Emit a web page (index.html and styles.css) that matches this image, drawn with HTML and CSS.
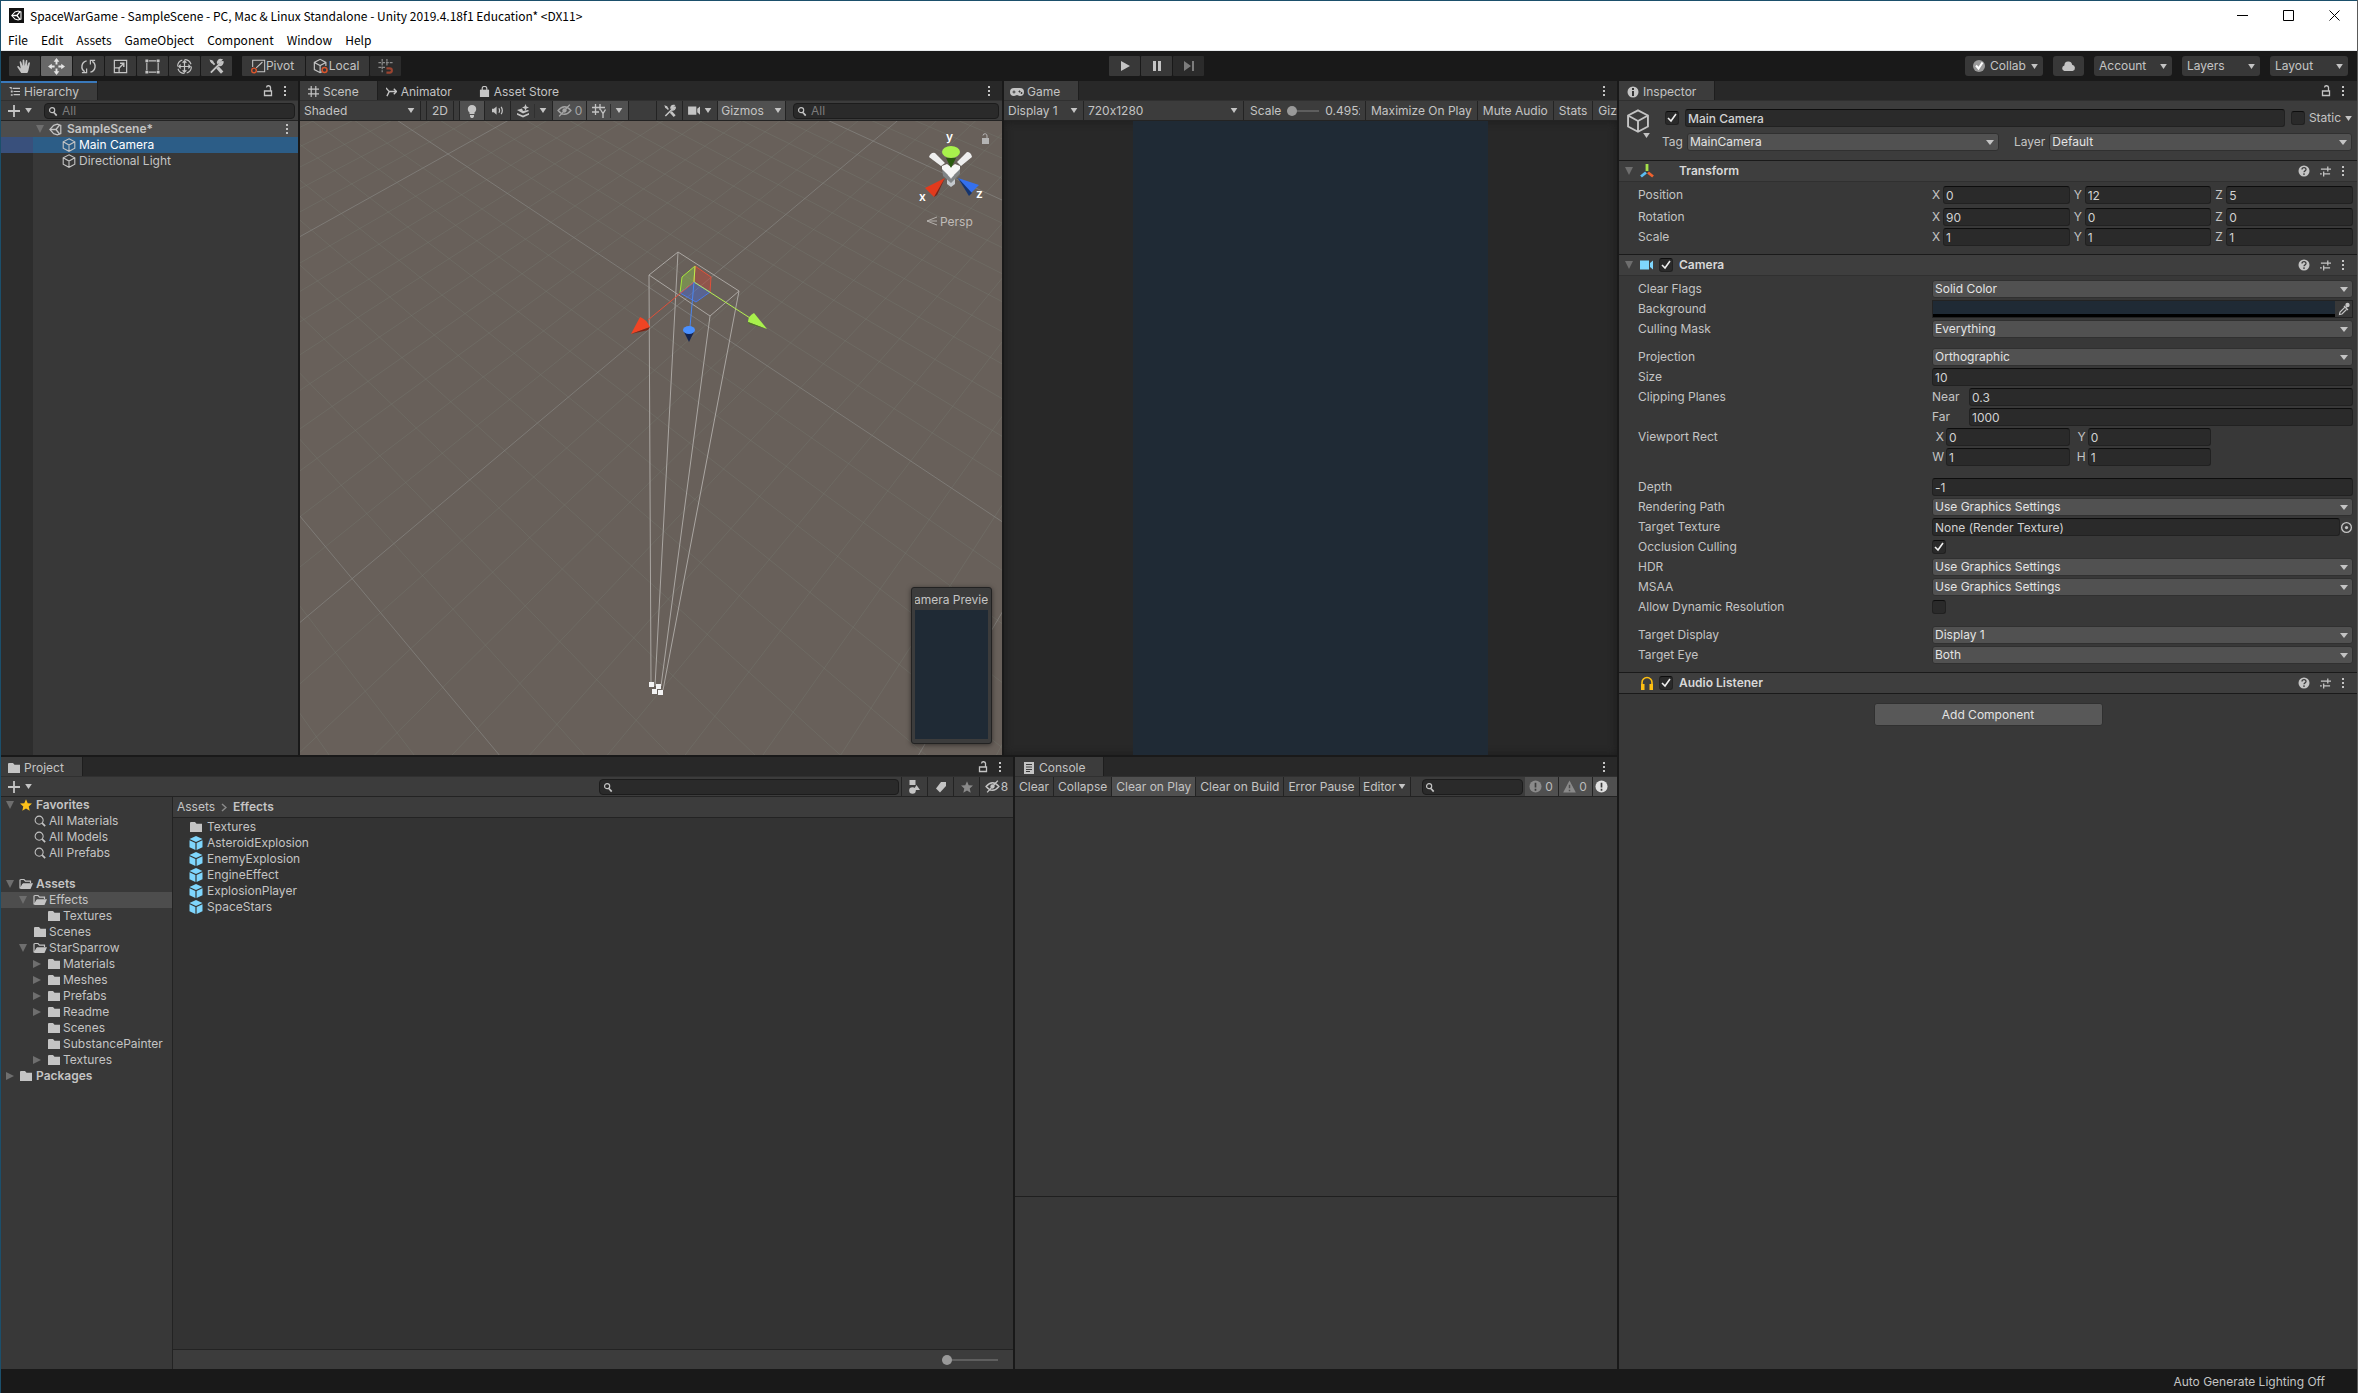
FILE: index.html
```html
<!DOCTYPE html>
<html lang="en">
<head>
<meta charset="utf-8">
<title>SpaceWarGame - SampleScene - Unity</title>
<link rel="stylesheet" href="styles.css">
</head>
<body>
<svg class="sprite" aria-hidden="true">
  <symbol id="i-unity" viewBox="0 0 14 14"><path d="M1 7 5 2.500 9 1.300 12.700 2.500V11.500L9 12.700 5 11.500Z" fill="none" stroke="currentColor" stroke-width="1.300"/><path d="M1 7H7.500L11.500 2M7.500 7l4 5" fill="none" stroke="currentColor" stroke-width="1.600"/></symbol>
  <symbol id="i-hand" viewBox="0 0 18 18"><path d="M5.500 16 1.500 9.800c-.5-1 .7-1.800 1.500-.9L5 11 3.900 4.600c-.2-1.200 1.400-1.500 1.700-.4L7 8.500V2.400c0-1.200 1.700-1.200 1.800 0L9.300 8.400l1-5.500c.3-1.200 1.900-1 1.700.3L11.600 8.800l1.500-3.700c.4-1 1.900-.6 1.600.6L13.400 12c-.3 2-.9 3-1.400 4Z" fill="currentColor"/></symbol>
  <symbol id="i-move" viewBox="0 0 18 18"><path d="M9 0 12 4H10V7H8V4H6ZM9 18 6 14H8V11h2v3h2ZM0 9 4 6V8H7v2H4v2ZM18 9l-4 3V10H11V8h3V6Z" fill="currentColor"/></symbol>
  <symbol id="i-rotate" viewBox="0 0 18 18"><path d="M7 3A6.300 6.300 0 0 0 5 14.500M11 15A6.300 6.300 0 0 0 13 3.500" fill="none" stroke="currentColor" stroke-width="1.500"/><path d="M2 15.500H7V11M16 2.500H11V7" fill="none" stroke="currentColor" stroke-width="1.300"/></symbol>
  <symbol id="i-scale" viewBox="0 0 18 18"><path d="M2.500 2.500h13v13h-13ZM2.500 10.500h5v5" fill="none" stroke="currentColor" stroke-width="1.300"/><path d="M7 11 12 6M8.500 5.500h4v4" fill="none" stroke="currentColor" stroke-width="1.500"/></symbol>
  <symbol id="i-rect" viewBox="0 0 18 18"><path d="M5 3h8M5 15h8M3 5v8M15 5v8" stroke="currentColor" stroke-width="1.200"/><path d="M1.500 1.500h3v3h-3ZM13.500 1.500h3v3h-3ZM1.500 13.500h3v3h-3ZM13.500 13.500h3v3h-3Z" fill="currentColor"/></symbol>
  <symbol id="i-multi" viewBox="0 0 18 18"><circle cx="9" cy="9" r="7.300" fill="none" stroke="currentColor" stroke-width="1.200" stroke-dasharray="9 2.400"/><path d="M9 3v12M3 9h12M7 5l2-2 2 2M7 13l2 2 2-2M5 7 3 9l2 2M13 7l2 2-2 2" fill="none" stroke="currentColor" stroke-width="1.300"/></symbol>
  <symbol id="i-tools" viewBox="0 0 18 18"><path d="M3 15.500 12 6.500M15.500 3.500 13 6 11.500 4.500 14 2a3 3 0 0 0-3.500 4" fill="none" stroke="currentColor" stroke-width="2"/><path d="M15.500 3.500a3.200 3.200 0 0 1-4 4M3 3l4 4" fill="none" stroke="currentColor" stroke-width="2"/><path d="M10 10l5 5.500" stroke="currentColor" stroke-width="3.400"/><path d="M1.500 1.500l4 1.500.5 2L3.500 5.500Z" fill="currentColor"/></symbol>
  <symbol id="i-pivot" viewBox="0 0 18 18"><path d="M3 10V2.500H16.500V15.500H8M7 11 14 4.500" fill="none" stroke="currentColor" stroke-width="1.200"/><circle cx="4.500" cy="14" r="2.600" fill="none" stroke="#d9552c" stroke-width="1.600"/></symbol>
  <symbol id="i-local" viewBox="0 0 18 18"><path d="M10 15.500 8 16.500 1.500 13V5L8 1.500 14.500 5V9M1.500 5 8 8.500 14.500 5M8 8.500v8" fill="none" stroke="currentColor" stroke-width="1.300"/><circle cx="13" cy="13.500" r="2.800" fill="none" stroke="#d9552c" stroke-width="1.600"/></symbol>
  <symbol id="i-snap" viewBox="0 0 18 18"><path d="M5.500 1v14M10.500 1v8M1.500 5h15M1.500 10h8" stroke="#8a8a8a" stroke-width="1.300" stroke-dasharray="3 1"/><path d="M10 11h3.500a2 2 0 0 1 0 4.500H10" fill="none" stroke="#9c4430" stroke-width="2.200"/></symbol>
  <symbol id="i-play" viewBox="0 0 10 10"><path d="M1 0 10 5 1 10Z" fill="currentColor"/></symbol>
  <symbol id="i-pause" viewBox="0 0 10 10"><path d="M1 0h3v10H1ZM6 0h3v10H6Z" fill="currentColor"/></symbol>
  <symbol id="i-step" viewBox="0 0 10 10"><path d="M0 0 7 5 0 10ZM8 0h2v10H8Z" fill="currentColor"/></symbol>
  <symbol id="i-down" viewBox="0 0 8 6"><path d="M0 0H8L4 6Z" fill="currentColor"/></symbol>
  <symbol id="i-open" viewBox="0 0 8 8"><path d="M0 0H8L4 8Z" fill="currentColor"/></symbol>
  <symbol id="i-shut" viewBox="0 0 8 8"><path d="M0 0 8 4 0 8Z" fill="currentColor"/></symbol>
  <symbol id="i-dots" viewBox="0 0 4 12"><path d="M1 1h2v2H1ZM1 5h2v2H1ZM1 9h2v2H1Z" fill="currentColor"/></symbol>
  <symbol id="i-lock" viewBox="0 0 10 12"><path d="M1.500 6h7v4.500h-7ZM7.500 6V3a2 2 0 0 0-4-.5" fill="none" stroke="currentColor" stroke-width="1.300"/></symbol>
  <symbol id="i-list" viewBox="0 0 12 12"><path d="M4 2.500h8M5 6h7M5 9.500h7" stroke="currentColor" stroke-width="1.300"/><path d="M0 1h3v3ZM2 5h2v2H2ZM2 9h2v1.500H2Z" fill="currentColor"/></symbol>
  <symbol id="i-hash" viewBox="0 0 12 12"><path d="M3.500 0v12M8.500 0v12M0 3.500h12M0 8.500h12" stroke="currentColor" stroke-width="1.300"/></symbol>
  <symbol id="i-anim" viewBox="0 0 12 12"><path d="M0 2l3.500 4L1 11M3.500 6H11M8.500 3 11.500 6l-3 3" fill="none" stroke="currentColor" stroke-width="1.500"/></symbol>
  <symbol id="i-bag" viewBox="0 0 12 12"><path d="M1 4h10v8H1Z" fill="currentColor"/><path d="M3.500 6V2.500a2.500 2 0 0 1 5 0V6" fill="none" stroke="currentColor" stroke-width="1.300"/></symbol>
  <symbol id="i-game" viewBox="0 0 14 12"><path d="M4 2h6a4 4 0 0 1 0 8c-1.500 0-2-1-3-1s-1.500 1-3 1a4 4 0 0 1 0-8Z" fill="currentColor"/><path d="M2.500 6h3M4 4.500v3M9 5h1v1H9ZM11 6.500h1v1h-1Z" stroke="#3c3c3c"/></symbol>
  <symbol id="i-info" viewBox="0 0 12 12"><circle cx="6" cy="6" r="5.500" fill="currentColor"/><path d="M5 2h2v2H5ZM5 5h2v5H5Z" fill="#333"/></symbol>
  <symbol id="i-help" viewBox="0 0 12 12"><circle cx="6" cy="6" r="5.500" fill="currentColor"/><path d="M4 4.500c0-2.500 4-2.500 4 0 0 1.500-2 1.200-2 2.800M6 8.300V10" fill="none" stroke="#3c3c3c" stroke-width="1.300"/></symbol>
  <symbol id="i-preset" viewBox="0 0 12 12"><path d="M1 3.500h11M8.500 0.500v5.500M0 8.500h2M4 6v5.500M4 8.500h7" stroke="currentColor" stroke-width="1.400"/></symbol>
  <symbol id="i-plus" viewBox="0 0 12 12"><path d="M6 0v12M0 6h12" stroke="currentColor" stroke-width="1.800"/></symbol>
  <symbol id="i-find" viewBox="0 0 12 12"><circle cx="4.500" cy="4.500" r="2.800" fill="none" stroke="currentColor" stroke-width="1.300"/><path d="M6.500 7 9.500 10.500" stroke="currentColor" stroke-width="1.800"/></symbol>
  <symbol id="i-glass" viewBox="0 0 14 14"><circle cx="6" cy="6" r="4.700" fill="none" stroke="currentColor" stroke-width="1.200"/><path d="M9.500 9.500 13 13" stroke="currentColor" stroke-width="2"/></symbol>
  <symbol id="i-cube" viewBox="0 0 14 14"><path d="M7 .8 12.800 3.800V10.200L7 13.300 1.200 10.200V3.800ZM1.200 3.800 7 7l5.800-3.200M7 7v6.300" fill="none" stroke="currentColor" stroke-width="1.100"/></symbol>
  <symbol id="i-prefab" viewBox="0 0 14 14"><path d="M7 0 13.500 3 7 6 .5 3ZM.5 4.200 6.400 7V14L.5 11.200ZM13.500 4.200 7.600 7V14l5.900-2.800Z" fill="#7fd6fd"/></symbol>
  <symbol id="i-folder" viewBox="0 0 14 12"><path d="M1 1.500 2 1H6L7.500 2.700H13V11H1Z" fill="currentColor"/></symbol>
  <symbol id="i-fopen" viewBox="0 0 14 12"><path d="M1 10.500V2L2 1.500H5L6.500 3.200H11.500V5M1.500 10.500 4 6" fill="none" stroke="currentColor" stroke-width="1.200"/><path d="M4 5.300H14L11.500 11H1.200Z" fill="currentColor"/></symbol>
  <symbol id="i-star" viewBox="0 0 12 12"><path d="M6 .3 7.700 4.200 12 4.600 8.700 7.400 9.700 11.700 6 9.400 2.300 11.700 3.300 7.400 0 4.600 4.300 4.200Z" fill="currentColor"/></symbol>
  <symbol id="i-bulb" viewBox="0 0 12 14"><path d="M3.500 8.500a4.200 4.200 0 1 1 5 0V10h-5ZM4 11h4v1.500L7 14H5L4 12.500Z" fill="currentColor"/></symbol>
  <symbol id="i-audio" viewBox="0 0 14 12"><path d="M1 4H3L6 1.500v9L3 8H1Z" fill="currentColor"/><path d="M8.500 3.500q1.500 2.500 0 5M11 2q2.500 4 0 8" fill="none" stroke="currentColor" stroke-width="1.300"/></symbol>
  <symbol id="i-fx" viewBox="0 0 14 14"><path d="M1 6 6 4.500 7 7 12 6 13 7 7 9.500ZM1 9l6 2.500L13 9v1.800L7 13.500 1 10.800Z" fill="currentColor"/><path d="M9.500 0 10.500 2.500 13 3.500 10.500 4.500 9.500 7 8.500 4.500 6 3.500 8.500 2.500Z" fill="currentColor"/></symbol>
  <symbol id="i-hidden" viewBox="0 0 14 12"><path d="M1 6q6-7 12 0-6 7-12 0ZM2 11.500 12 .5" fill="none" stroke="currentColor" stroke-width="1.300"/><circle cx="7" cy="6" r="2" fill="currentColor"/></symbol>
  <symbol id="i-gridy" viewBox="0 0 14 14"><path d="M3.500 0v11M8 0v6M0 3.500h13M0 8h7M8.500 5.500 11 9.500l2.500-4M11 9.500V14" fill="none" stroke="currentColor" stroke-width="1.300"/></symbol>
  <symbol id="i-cam" viewBox="0 0 14 12"><path d="M0 1.500h9v9H0ZM10 4 13 1.500v9L10 8Z" fill="currentColor"/></symbol>
  <symbol id="i-shapes" viewBox="0 0 12 14"><path d="M1 0h6v5H1ZM8 5l3.500 5H5Z" fill="currentColor"/><circle cx="4" cy="10.500" r="3.300" fill="currentColor"/></symbol>
  <symbol id="i-tag" viewBox="0 0 12 12"><path d="M6 1h5v4L5 11.500 1 7.500Z" fill="currentColor"/></symbol>
  <symbol id="i-note" viewBox="0 0 12 12"><path d="M1 0h10v12H1Z" fill="currentColor"/><path d="M3 2.500h6M3 5h6M3 7.500h6M3 9.500h4" stroke="#3c3c3c"/></symbol>
  <symbol id="i-bang" viewBox="0 0 14 14"><circle cx="7" cy="7" r="6.500" fill="currentColor"/><path d="M7 3v5M7 9.500v2" stroke="#3c3c3c" stroke-width="1.800"/></symbol>
  <symbol id="i-warn" viewBox="0 0 14 14"><path d="M7 .5 13.800 13.500H.2Z" fill="currentColor"/><path d="M7 5v4M7 10.500v1.500" stroke="#505050" stroke-width="1.600"/></symbol>
  <symbol id="i-axes" viewBox="0 0 14 14"><path d="M7 0v7" stroke="#a5e04a" stroke-width="2.800"/><path d="M6 8.500 1 12.500" stroke="#5bbcf0" stroke-width="2.800"/><path d="M8 8.500l5 4" stroke="#f0622e" stroke-width="2.800"/></symbol>
  <symbol id="i-phones" viewBox="0 0 14 14"><path d="M2 9V6.500a5 5 0 0 1 10 0V9" fill="none" stroke="#fdbf12" stroke-width="1.600"/><path d="M1 8h3.500v6H1ZM9.500 8H13v6H9.500Z" fill="#fdbf12"/></symbol>
  <symbol id="i-cloud" viewBox="0 0 16 12"><path d="M3.500 11a3.200 3.200 0 0 1 0-6.200A4.300 4.300 0 0 1 12 4a3.600 3.600 0 0 1 .5 7Z" fill="currentColor"/></symbol>
  <symbol id="i-check" viewBox="0 0 12 12"><circle cx="6" cy="6" r="6" fill="#9a9a9a"/><path d="M3 5.500 5.500 8.500 9.500 2.500" fill="none" stroke="#fff" stroke-width="2"/></symbol>
  <symbol id="i-drop" viewBox="0 0 12 14"><path d="M1.500 12.500 2 10 7 5l2 2-5 5ZM6 4l4 4M8 5.500 10 2.500" fill="none" stroke="currentColor" stroke-width="1.200"/><circle cx="9.500" cy="3" r="2.200" fill="currentColor"/></symbol>
  <symbol id="i-pick" viewBox="0 0 12 12"><circle cx="6" cy="6" r="4.500" fill="none" stroke="currentColor" stroke-width="1.200"/><circle cx="6" cy="6" r="1.500" fill="currentColor"/></symbol>
</svg>

<header class="titlebar">
  <div class="caption">
    <span class="app-icon"><svg width="11" height="11"><use href="#i-unity"/></svg></span>
    <span class="caption-text">SpaceWarGame - SampleScene - PC, Mac &amp; Linux Standalone - Unity 2019.4.18f1 Education* &lt;DX11&gt;</span>
    <div class="win-controls">
      <button aria-label="Minimize"><svg width="11" height="11"><path d="M0 5.500h11" stroke="#000"/></svg></button>
      <button aria-label="Maximize"><svg width="11" height="11"><path d="M.5.500h10v10H.5Z" fill="none" stroke="#000"/></svg></button>
      <button aria-label="Close"><svg width="11" height="11"><path d="M.5.500l10 10M10.500.500l-10 10" stroke="#000"/></svg></button>
    </div>
  </div>
  <nav class="menu"><a href="#">File</a><a href="#">Edit</a><a href="#">Assets</a><a href="#">GameObject</a><a href="#">Component</a><a href="#">Window</a><a href="#">Help</a></nav>
</header>

<div class="toolbar">
  <div class="group tools">
    <button aria-label="Hand"><svg width="17" height="17"><use href="#i-hand"/></svg></button>
    <button class="on" aria-label="Move"><svg width="17" height="17"><use href="#i-move"/></svg></button>
    <button aria-label="Rotate"><svg width="17" height="17"><use href="#i-rotate"/></svg></button>
    <button aria-label="Scale"><svg width="17" height="17"><use href="#i-scale"/></svg></button>
    <button aria-label="Rect"><svg width="17" height="17"><use href="#i-rect"/></svg></button>
    <button aria-label="Transform"><svg width="17" height="17"><use href="#i-multi"/></svg></button>
    <button aria-label="Custom tools"><svg width="17" height="17"><use href="#i-tools"/></svg></button>
    <button class="wide first"><svg width="16" height="16"><use href="#i-pivot"/></svg>Pivot</button>
    <button class="wide"><svg width="16" height="16"><use href="#i-local"/></svg>Local</button>
    <button class="dim" aria-label="Snap"><svg width="17" height="17"><use href="#i-snap"/></svg></button>
  </div>
  <div class="group">
    <button aria-label="Play"><svg width="10" height="10"><use href="#i-play"/></svg></button>
    <button aria-label="Pause"><svg width="10" height="10"><use href="#i-pause"/></svg></button>
    <button class="dim" aria-label="Step"><svg width="10" height="10"><use href="#i-step"/></svg></button>
  </div>
  <div class="group account">
    <button class="drop collab"><svg width="12" height="12"><use href="#i-check"/></svg>Collab<svg width="7" height="5"><use href="#i-down"/></svg></button>
    <button aria-label="Services"><svg width="15" height="11"><use href="#i-cloud"/></svg></button>
    <button class="drop">Account<svg width="7" height="5"><use href="#i-down"/></svg></button>
    <button class="drop">Layers<svg width="7" height="5"><use href="#i-down"/></svg></button>
    <button class="drop">Layout<svg width="7" height="5"><use href="#i-down"/></svg></button>
  </div>
</div>

<div class="workspace">
  <div class="docks">
    <div class="dock-row upper">
      <section class="panel hierarchy">
        <div class="tabs">
          <div class="tab active focus"><svg width="11" height="11"><use href="#i-list"/></svg>Hierarchy</div>
          <div class="tab-tools"><svg width="10" height="12"><use href="#i-lock"/></svg><svg width="4" height="12"><use href="#i-dots"/></svg></div>
        </div>
        <div class="bar">
          <button class="add" aria-label="Create"><svg width="12" height="12"><use href="#i-plus"/></svg><svg width="7" height="5"><use href="#i-down"/></svg></button>
          <label class="search"><svg width="11" height="11"><use href="#i-find"/></svg><input type="text" placeholder="All" aria-label="Search hierarchy"></label>
        </div>
        <div class="tree scene-tree">
          <div class="row head"><svg class="arrow" width="8" height="8"><use href="#i-open"/></svg><svg width="13" height="13"><use href="#i-unity"/></svg><b>SampleScene*</b><svg class="end" width="4" height="12"><use href="#i-dots"/></svg></div>
          <div class="row sel"><svg width="14" height="14"><use href="#i-cube"/></svg>Main Camera</div>
          <div class="row"><svg width="14" height="14"><use href="#i-cube"/></svg>Directional Light</div>
        </div>
      </section>

      <section class="panel scene">
        <div class="tabs">
          <div class="tab active"><svg width="11" height="11"><use href="#i-hash"/></svg>Scene</div>
          <div class="tab"><svg width="11" height="11"><use href="#i-anim"/></svg>Animator</div>
          <div class="tab store"><svg width="11" height="11"><use href="#i-bag"/></svg>Asset Store</div>
          <div class="tab-tools"><svg width="4" height="12"><use href="#i-dots"/></svg></div>
        </div>
        <div class="bar">
          <button class="cell shaded"><span>Shaded</span><svg width="8" height="5"><use href="#i-down"/></svg></button>
          <button class="cell mode">2D</button>
          <button class="cell lit icon first" aria-label="Lighting"><svg width="12" height="14"><use href="#i-bulb"/></svg></button>
          <button class="cell icon" aria-label="Audio"><svg width="13" height="11"><use href="#i-audio"/></svg></button>
          <button class="cell split" aria-label="Effects"><svg width="14" height="14"><use href="#i-fx"/></svg><i></i><svg width="8" height="5"><use href="#i-down"/></svg></button>
          <button class="cell lit faint"><svg width="15" height="13"><use href="#i-hidden"/></svg>0</button>
          <button class="cell lit split" aria-label="Grid"><svg width="14" height="14"><use href="#i-gridy"/></svg><i></i><svg width="8" height="5"><use href="#i-down"/></svg></button>
          <span class="cell blank"></span>
          <button class="cell icon" aria-label="Editor tools"><svg width="14" height="14"><use href="#i-tools"/></svg></button>
          <button class="cell cam" aria-label="Camera"><svg width="13" height="11"><use href="#i-cam"/></svg><svg width="8" height="5"><use href="#i-down"/></svg></button>
          <button class="cell lit gizmos">Gizmos<i></i><svg width="8" height="5"><use href="#i-down"/></svg></button>
          <label class="search"><svg width="11" height="11"><use href="#i-find"/></svg><input type="text" placeholder="All" aria-label="Search scene"></label>
        </div>
        <div class="view">
          <svg class="canvas" viewBox="0 0 702 634" preserveAspectRatio="xMidYMid slice">
            <g id="grid"></g>
            <g fill="none" stroke="#aaa6a2">
              <path d="M378 131 349 154 410 195 439 170ZM349 154 351 563M378 131 355 565M410 195 361 565M439 170 363 569"/>
            </g>
            <path d="M349 561h5v5h-5ZM356 563h5v5h-5ZM352 568h5v5h-5ZM358 569h5v5h-5Z" fill="#f2f2f2"/>
            <path d="M395 145 382 156 380 172 394 161Z" fill="#8fc04a" fill-opacity=".45" stroke="#a5e83a"/>
            <path d="M395 145 411 156 410 171 394 161Z" fill="#c04a3a" fill-opacity=".45" stroke="#e0503a"/>
            <path d="M394 161 410 171 396 181 380 172Z" fill="#4a68c8" fill-opacity=".5" stroke="#4a7ae8"/>
            <path d="M395 145 394 161" stroke="#b4ee50"/>
            <path d="M394 161 348 199" stroke="#e0503a"/><path d="M394 161 450 197" stroke="#b4ee50"/><path d="M394 161 390 206" stroke="#4a86f0"/>
            <path d="M331 213 340 196Q346 198 350 206Z" fill="#f04424"/><path d="M331 213 350 206 348 209Z" fill="#7c2416"/>
            <path d="M467 208 454 192Q448 195 448 201Z" fill="#a8f04c"/><path d="M467 208 448 201 449 203Z" fill="#4e7426"/>
            <path d="M384 211 389 221 394 211Z" fill="#142450"/><ellipse cx="389" cy="209" rx="6" ry="4" fill="#4a90ff"/>
            <path d="M629 36Q631 31 635 32L645 42 641 45ZM672 36Q671 31 667 31L657 41 661 45Z" fill="#eee"/>
            <path d="M651 66 647 63V54H655V63Z" fill="#c4c8cc"/>
            <path d="M642 47 651 58 660 47V53L651 62 643 55Z" fill="#808486"/>
            <path d="M642 45 647 43 651 46 655 43 660 45V48L651 57 642 48Z" fill="#f6f6f6"/>
            <path d="M646 37H656L651 47Z" fill="#2a5a10"/><ellipse cx="651" cy="31" rx="9" ry="6" fill="#a8f24c"/>
            <path d="M645 57 625 67 634 76Z" fill="#e23a1c"/><path d="M645 57 637 74 634 76Z" fill="#7c2014"/>
            <path d="M658 57 679 64 669 74Z" fill="#3470ee"/><path d="M658 57 669 75 672 72Z" fill="#16346c"/>
            <g class="axis"><text x="646" y="20">y</text><text x="619" y="80">x</text><text x="676" y="77">z</text></g>
            <path d="M637 96 627 100 637 104M627 100h10" fill="none" stroke="#b4b0ac"/>
            <text class="persp" x="640" y="105">Persp</text>
            <path d="M682 17h7v6h-7Z" fill="#b4b4b4"/><path d="M687 17v-2a2 2 0 0 0-4-.5" fill="none" stroke="#b4b4b4"/>
          </svg>
          <div class="preview"><span>Camera Preview</span><div></div></div>
        </div>
      </section>

      <section class="panel game">
        <div class="tabs">
          <div class="tab active"><svg width="14" height="12"><use href="#i-game"/></svg>Game</div>
          <div class="tab-tools"><svg width="4" height="12"><use href="#i-dots"/></svg></div>
        </div>
        <div class="bar">
          <button class="cell disp"><span>Display 1</span><svg width="8" height="5"><use href="#i-down"/></svg></button>
          <button class="cell res"><span>720x1280</span><svg width="8" height="5"><use href="#i-down"/></svg></button>
          <label class="cell zoom">Scale<input class="slider" type="range" min="0" max="100" value="0"><output>0.495x</output></label>
          <button class="cell">Maximize On Play</button>
          <button class="cell">Mute Audio</button>
          <button class="cell">Stats</button>
          <button class="cell cut">Gizmos</button>
        </div>
        <div class="screen"><div></div></div>
      </section>
    </div>

    <div class="dock-row lower">
      <section class="panel project">
        <div class="tabs">
          <div class="tab active"><svg width="14" height="12"><use href="#i-folder"/></svg>Project</div>
          <div class="tab-tools"><svg width="10" height="12"><use href="#i-lock"/></svg><svg width="4" height="12"><use href="#i-dots"/></svg></div>
        </div>
        <div class="bar">
          <button class="add" aria-label="Create asset"><svg width="12" height="12"><use href="#i-plus"/></svg><svg width="7" height="5"><use href="#i-down"/></svg></button>
          <label class="search"><svg width="11" height="11"><use href="#i-find"/></svg><input type="text" aria-label="Search project"></label>
          <button class="cell icon" aria-label="Search by type"><svg width="13" height="14"><use href="#i-shapes"/></svg></button>
          <button class="cell icon" aria-label="Search by label"><svg width="12" height="12"><use href="#i-tag"/></svg></button>
          <button class="cell icon muted" aria-label="Save search"><svg width="12" height="12"><use href="#i-star"/></svg></button>
          <button class="cell count"><svg width="15" height="13"><use href="#i-hidden"/></svg>8</button>
        </div>
        <div class="browser">
          <div class="tree folders">
            <div class="row"><svg class="arrow" width="8" height="8"><use href="#i-open"/></svg><svg class="gold" width="14" height="12"><use href="#i-star"/></svg><b>Favorites</b></div>
            <div class="row d1 leaf"><svg width="14" height="12"><use href="#i-glass"/></svg>All Materials</div>
            <div class="row d1 leaf"><svg width="14" height="12"><use href="#i-glass"/></svg>All Models</div>
            <div class="row d1 leaf last"><svg width="14" height="12"><use href="#i-glass"/></svg>All Prefabs</div>
            <div class="row"><svg class="arrow" width="8" height="8"><use href="#i-open"/></svg><svg width="14" height="12"><use href="#i-fopen"/></svg><b>Assets</b></div>
            <div class="row d1 hot"><svg class="arrow" width="8" height="8"><use href="#i-open"/></svg><svg width="14" height="12"><use href="#i-fopen"/></svg>Effects</div>
            <div class="row d2 leaf"><svg width="14" height="12"><use href="#i-folder"/></svg>Textures</div>
            <div class="row d1 leaf"><svg width="14" height="12"><use href="#i-folder"/></svg>Scenes</div>
            <div class="row d1"><svg class="arrow" width="8" height="8"><use href="#i-open"/></svg><svg width="14" height="12"><use href="#i-fopen"/></svg>StarSparrow</div>
            <div class="row d2"><svg class="arrow" width="8" height="8"><use href="#i-shut"/></svg><svg width="14" height="12"><use href="#i-folder"/></svg>Materials</div>
            <div class="row d2"><svg class="arrow" width="8" height="8"><use href="#i-shut"/></svg><svg width="14" height="12"><use href="#i-folder"/></svg>Meshes</div>
            <div class="row d2"><svg class="arrow" width="8" height="8"><use href="#i-shut"/></svg><svg width="14" height="12"><use href="#i-folder"/></svg>Prefabs</div>
            <div class="row d2"><svg class="arrow" width="8" height="8"><use href="#i-shut"/></svg><svg width="14" height="12"><use href="#i-folder"/></svg>Readme</div>
            <div class="row d2 leaf"><svg width="14" height="12"><use href="#i-folder"/></svg>Scenes</div>
            <div class="row d2 leaf"><svg width="14" height="12"><use href="#i-folder"/></svg>SubstancePainter</div>
            <div class="row d2"><svg class="arrow" width="8" height="8"><use href="#i-shut"/></svg><svg width="14" height="12"><use href="#i-folder"/></svg>Textures</div>
            <div class="row"><svg class="arrow" width="8" height="8"><use href="#i-shut"/></svg><svg width="14" height="12"><use href="#i-folder"/></svg><b>Packages</b></div>
          </div>
          <div class="files">
            <div class="crumbs"><a href="#">Assets</a><svg width="6" height="9"><path d="M1 1l4 3.500-4 3.500" fill="none" stroke="#8a8a8a" stroke-width="1.500"/></svg><b>Effects</b></div>
            <div class="tree list">
              <div class="row"><svg width="14" height="12"><use href="#i-folder"/></svg>Textures</div>
              <div class="row"><svg width="14" height="14"><use href="#i-prefab"/></svg>AsteroidExplosion</div>
              <div class="row"><svg width="14" height="14"><use href="#i-prefab"/></svg>EnemyExplosion</div>
              <div class="row"><svg width="14" height="14"><use href="#i-prefab"/></svg>EngineEffect</div>
              <div class="row"><svg width="14" height="14"><use href="#i-prefab"/></svg>ExplosionPlayer</div>
              <div class="row"><svg width="14" height="14"><use href="#i-prefab"/></svg>SpaceStars</div>
            </div>
            <div class="foot"><input class="slider" type="range" min="0" max="100" value="0" aria-label="Icon size"></div>
          </div>
        </div>
      </section>

      <section class="panel console">
        <div class="tabs">
          <div class="tab active"><svg width="12" height="12"><use href="#i-note"/></svg>Console</div>
          <div class="tab-tools"><svg width="4" height="12"><use href="#i-dots"/></svg></div>
        </div>
        <div class="bar">
          <button class="cell">Clear</button>
          <button class="cell">Collapse</button>
          <button class="cell lit">Clear on Play</button>
          <button class="cell">Clear on Build</button>
          <button class="cell">Error Pause</button>
          <button class="cell editor">Editor<svg width="8" height="5"><use href="#i-down"/></svg></button>
          <label class="search"><svg width="11" height="11"><use href="#i-find"/></svg><input type="text" aria-label="Search log"></label>
          <button class="cell lit tally"><svg width="13" height="13"><use href="#i-bang"/></svg>0</button>
          <button class="cell lit tally"><svg width="13" height="13"><use href="#i-warn"/></svg>0</button>
          <button class="cell lit cut errors" aria-label="Errors"><svg width="13" height="13"><use href="#i-bang"/></svg></button>
        </div>
        <div class="log"></div>
        <div class="detail"></div>
      </section>
    </div>
  </div>

  <section class="panel inspector">
    <div class="tabs">
      <div class="tab active"><svg width="12" height="12"><use href="#i-info"/></svg>Inspector</div>
      <div class="tab-tools"><svg width="10" height="12"><use href="#i-lock"/></svg><svg width="4" height="12"><use href="#i-dots"/></svg></div>
    </div>
    <div class="object">
      <div class="object-icon"><svg width="24" height="24"><use href="#i-cube"/></svg><svg width="7" height="5"><use href="#i-down"/></svg></div>
      <div class="object-fields">
        <div class="name-row">
          <input type="checkbox" checked aria-label="Active">
          <input class="field name" type="text" value="Main Camera" aria-label="Name">
          <label class="static"><input type="checkbox">Static<svg width="7" height="5"><use href="#i-down"/></svg></label>
        </div>
        <div class="tag-row">
          <label for="tag">Tag</label><select id="tag"><option>MainCamera</option></select>
          <label for="layer">Layer</label><select id="layer"><option>Default</option></select>
        </div>
      </div>
    </div>

    <div class="comp-head"><svg class="arrow" width="8" height="8"><use href="#i-open"/></svg><svg class="kind" width="14" height="14"><use href="#i-axes"/></svg><span class="tick"></span><b>Transform</b><svg width="12" height="12"><use href="#i-help"/></svg><svg width="11" height="11"><use href="#i-preset"/></svg><svg width="4" height="12"><use href="#i-dots"/></svg></div>
    <div class="props">
      <div class="prop wide-gap"><span>Position</span><div class="triple"><label>X<input class="field" value="0"></label><label>Y<input class="field" value="12"></label><label>Z<input class="field" value="5"></label></div></div>
      <div class="prop"><span>Rotation</span><div class="triple"><label>X<input class="field" value="90"></label><label>Y<input class="field" value="0"></label><label>Z<input class="field" value="0"></label></div></div>
      <div class="prop"><span>Scale</span><div class="triple"><label>X<input class="field" value="1"></label><label>Y<input class="field" value="1"></label><label>Z<input class="field" value="1"></label></div></div>
    </div>

    <div class="comp-head"><svg class="arrow" width="8" height="8"><use href="#i-open"/></svg><svg class="kind blue" width="14" height="12"><use href="#i-cam"/></svg><span class="tick"><input type="checkbox" checked aria-label="Camera enabled"></span><b>Camera</b><svg width="12" height="12"><use href="#i-help"/></svg><svg width="11" height="11"><use href="#i-preset"/></svg><svg width="4" height="12"><use href="#i-dots"/></svg></div>
    <div class="props">
      <div class="prop"><label for="clear">Clear Flags</label><select id="clear"><option>Solid Color</option></select></div>
      <div class="prop"><span>Background</span><div class="color"><button class="swatch" aria-label="Background colour"></button><svg width="12" height="14"><use href="#i-drop"/></svg></div></div>
      <div class="prop sep"><label for="cull">Culling Mask</label><select id="cull"><option>Everything</option></select></div>
      <div class="prop"><label for="proj">Projection</label><select id="proj"><option>Orthographic</option></select></div>
      <div class="prop"><label for="size">Size</label><input class="field" id="size" value="10"></div>
      <div class="prop"><span>Clipping Planes</span><label class="plane"><span>Near</span><input class="field" value="0.3"></label></div>
      <div class="prop"><span></span><label class="plane"><span>Far</span><input class="field" value="1000"></label></div>
      <div class="prop"><span>Viewport Rect</span><div class="triple rect"><label><span>X</span><input class="field" value="0"></label><label><span>Y</span><input class="field" value="0"></label></div></div>
      <div class="prop sep tall"><span></span><div class="triple rect"><label><span>W</span><input class="field" value="1"></label><label><span>H</span><input class="field" value="1"></label></div></div>
      <div class="prop"><label for="depth">Depth</label><input class="field" id="depth" value="-1"></div>
      <div class="prop"><label for="path">Rendering Path</label><select id="path"><option>Use Graphics Settings</option></select></div>
      <div class="prop"><label for="tex">Target Texture</label><div class="object-field"><input class="field" id="tex" value="None (Render Texture)"><svg width="13" height="13"><use href="#i-pick"/></svg></div></div>
      <div class="prop"><label for="occ">Occlusion Culling</label><input type="checkbox" id="occ" checked></div>
      <div class="prop"><label for="hdr">HDR</label><select id="hdr"><option>Use Graphics Settings</option></select></div>
      <div class="prop"><label for="msaa">MSAA</label><select id="msaa"><option>Use Graphics Settings</option></select></div>
      <div class="prop sep"><label for="dyn">Allow Dynamic Resolution</label><input type="checkbox" id="dyn"></div>
      <div class="prop"><label for="disp">Target Display</label><select id="disp"><option>Display 1</option></select></div>
      <div class="prop"><label for="eye">Target Eye</label><select id="eye"><option>Both</option></select></div>
    </div>

    <div class="comp-head closed"><span class="arrow"></span><svg class="kind" width="14" height="14"><use href="#i-phones"/></svg><span class="tick"><input type="checkbox" checked aria-label="Audio Listener enabled"></span><b>Audio Listener</b><svg width="12" height="12"><use href="#i-help"/></svg><svg width="11" height="11"><use href="#i-preset"/></svg><svg width="4" height="12"><use href="#i-dots"/></svg></div>
    <button class="add-component">Add Component</button>
  </section>
</div>
<footer class="status">Auto Generate Lighting Off</footer>
<script src="scene.js"></script>
</body>
</html>
```
FILE: styles.css
```css
* { box-sizing: border-box; }
body {
  margin: 0;
  min-height: 100vh;
  display: flex;
  flex-direction: column;
  border-left: 1px solid #1b4f6b;
  border-right: 1px solid #5a5a5a;
  background: #191919;
  color: #c4c4c4;
  font: 12px/16px Inter, "Liberation Sans", sans-serif;
  font-feature-settings: "calt" 0;
}
button, input, select { font: inherit; font-feature-settings: inherit; color: inherit; margin: 0; }
button { border: 0; padding: 0; background: none; white-space: nowrap; }
svg { flex: none; }
a { color: inherit; text-decoration: none; }
b { font-weight: 600; }
.sprite { position: absolute; width: 0; height: 0; }

/* window frame */
.titlebar {
  height: 51px;
  border-top: 1px solid #1b4f6b;
  border-bottom: 1px solid #e8eaec;
  background: #fff;
  color: #000;
  font-family: "Noto Sans CJK KR", "Open Sans", sans-serif;
}
.caption { display: flex; align-items: center; gap: 6px; height: 29px; padding-left: 8px; }
.app-icon { display: grid; place-items: center; width: 15px; height: 15px; background: #111; color: #fff; }
.win-controls { display: flex; margin-left: auto; }
.win-controls button { display: grid; place-items: center; width: 46px; height: 28px; }
.menu { display: flex; gap: 13px; padding-left: 7px; line-height: 20px; }

/* main toolbar */
.toolbar {
  display: grid;
  grid-template-columns: 1109fr auto 1154fr;
  align-items: center;
  height: 30px;
}
.group { display: flex; gap: 1px; }
.group button {
  display: flex;
  align-items: center;
  justify-content: center;
  width: 31px;
  height: 20px;
  border-radius: 1px;
  background: #383838;
}
.group .on { background: #686868; color: #e4e4e4; }
.group .dim { background: #2b2b2b; color: #7c7c7c; }
.tools { padding-left: 8px; }
.group .wide { width: 63px; padding-right: 3px; }
.group .first { margin-left: 9px; }
.account { justify-content: flex-end; gap: 10px; padding-right: 9px; }
.account button { border-radius: 3px; }
.account .drop { width: 78px; justify-content: space-between; padding: 0 5px; }
.account .collab { padding-left: 8px; }

/* docking */
.workspace { flex: 1; display: grid; grid-template-columns: minmax(0, 1fr) 738px; gap: 2px; }
.docks { display: flex; flex-direction: column; gap: 2px; min-width: 0; }
.dock-row { display: flex; gap: 2px; min-height: 0; }
.upper { flex: 674 1 0; }
.lower { flex: 612 1 0; }
.panel { display: flex; flex-direction: column; min-width: 0; overflow: hidden; background: #383838; }
.hierarchy { width: 297px; }
.scene { flex: 702 1 0; }
.game { flex: 613 1 0; }
.project { flex: 1012 1 0; }
.console { flex: 602 1 0; }

.tabs { display: flex; height: 19px; background: #282828; }
.tab { display: flex; align-items: center; gap: 4px; padding: 2px 11px 0 8px; white-space: nowrap; }
.tab.active { padding-right: 18px; background: #3c3c3c; border-right: 1px solid #1e1e1e; }
.tab.focus { box-shadow: inset 0 2px #3a79bb; }
.tab.store { padding-left: 16px; }
.game .tab, .project .tab { gap: 3px; padding-left: 6px; }
.tab-tools { display: flex; align-items: center; gap: 10px; margin-left: auto; padding-right: 11px; }

.bar { display: flex; align-items: stretch; height: 21px; border-top: 1px solid #303030; border-bottom: 1px solid #232323; background: #3c3c3c; }
.cell { display: flex; align-items: center; justify-content: center; gap: 3px; padding: 0 5px; border-right: 1px solid #232323; white-space: nowrap; }
.cell.lit { background: #505050; }
.cell i { width: 1px; height: 14px; background: #303030; }
.cell.icon { width: 26px; padding: 0; }
.cell.faint { width: 34px; color: #a4a4a4; }
.cell.split { width: 42px; gap: 4px; }
.cell.cut { flex: 1 1 0; min-width: 0; justify-content: flex-start; overflow: hidden; padding-right: 0; border: 0; }
.add { display: flex; align-items: center; gap: 5px; padding-left: 7px; }
.search {
  display: flex;
  align-items: center;
  gap: 3px;
  min-width: 0;
  height: 16px;
  margin: 2px 3px 0 12px;
  padding-left: 3px;
  border: 1px solid #1c1c1c;
  border-radius: 4px;
  background: #2a2a2a;
}
.search input { flex: 1; min-width: 0; padding: 0; border: 0; background: none; outline: 0; }
.search input::placeholder { color: #7c7c7c; opacity: 1; }
.hierarchy .search { flex: 1; }

/* scene toolbar */
.shaded { width: 121px; justify-content: space-between; padding-left: 4px; }
.mode { width: 28px; margin-left: 5px; border-left: 1px solid #232323; }
.bar .first { margin-left: 5px; border-left: 1px solid #232323; }
.blank { width: 28px; }
.cam { width: 35px; }
.gizmos { width: 68px; gap: 5px; }
.scene .search { flex: 1; margin-left: 7px; }

.view { position: relative; flex: 1; min-height: 0; background: #68605a; overflow: hidden; }
.canvas { position: absolute; inset: 0; width: 100%; height: 100%; }
.axis { fill: #fff; font-size: 12px; font-weight: 600; }
.persp { fill: #c0bcb8; font-size: 12px; }
#grid .minor { stroke: #7c8078; stroke-opacity: .3; }
#grid .major { stroke: #8c8c88; stroke-opacity: .6; }
.preview {
  position: absolute;
  right: 10px;
  bottom: 11px;
  width: 81px;
  height: 157px;
  display: flex;
  flex-direction: column;
  padding: 3px 3px 4px;
  border: 1px solid #222;
  border-radius: 3px;
  background: #3c3c3c;
  box-shadow: 0 1px 5px rgba(0, 0, 0, .5);
}
.preview span { display: flex; justify-content: center; height: 19px; overflow: hidden; line-height: 18px; white-space: nowrap; }
.preview div { flex: 1; background: #1f2a35; }

/* game view */
.disp { width: 80px; justify-content: space-between; padding-left: 4px; }
.res { width: 160px; justify-content: space-between; padding-left: 4px; }
.zoom { width: 122px; justify-content: flex-start; gap: 6px; padding-left: 6px; }
.zoom .slider { width: 32px; }
.zoom output { width: 36px; overflow: hidden; }
.slider { appearance: none; height: 12px; background: linear-gradient(#5e5e5e, #5e5e5e) center / 100% 2px no-repeat; }
.slider::-webkit-slider-thumb { appearance: none; width: 10px; height: 10px; border-radius: 50%; background: #999; }
.screen { flex: 1; display: flex; justify-content: center; background: #282828; box-shadow: inset 0 0 8px #1c1c1c; }
.screen div { width: 58%; background: #1f2a35; }

/* trees */
.row { display: flex; align-items: center; gap: 3px; height: 16px; white-space: nowrap; }
.arrow { color: #6e6e6e; width: 8px; }
.scene-tree { flex: 1; background: linear-gradient(90deg, #2d2d2d 32px, #383838 32px); }
.scene-tree .row { padding-left: 61px; }
.scene-tree .head { padding: 0 9px 0 35px; gap: 5px; background: #4d4d4d; }
.scene-tree .end { margin-left: auto; }
.scene-tree .sel { background: linear-gradient(90deg, #39507c 32px, #2c5d87 32px); color: #fff; }
.scene-tree .sel svg { color: #c4c4c4; }

.project .search { width: 300px; margin-left: auto; margin-right: 2px; }
.project .bar .cell { border-right: 0; border-left: 1px solid #232323; }
.muted { color: #8a8a8a; }
.count { width: 34px; padding: 0; gap: 1px; }
.browser { flex: 1; display: grid; grid-template-columns: 172px minmax(0, 1fr); }
.folders { border-right: 1px solid #232323; }
.folders .row { padding-left: 5px; gap: 3px; }
.folders .row .arrow { margin-right: 2px; }
.folders .d1 { padding-left: 18px; gap: 2px; }
.folders .d2 { padding-left: 32px; gap: 2px; }
.folders .d1 .arrow, .folders .d2 .arrow { margin-right: 4px; }
.folders .d1.leaf { padding-left: 32px; }
.folders .d2.leaf { padding-left: 46px; }
.folders .hot { background: #4d4d4d; }
.folders .last { margin-bottom: 15px; }
.gold { color: #fdc21a; }
.files { display: flex; flex-direction: column; background: #333; }
.crumbs { display: flex; align-items: center; gap: 6px; height: 21px; padding-left: 4px; border-bottom: 1px solid #232323; background: #3c3c3c; }
.list { flex: 1; padding: 1px 0 0 16px; }
.list .row { gap: 4px; }
.foot { display: flex; align-items: center; justify-content: flex-end; height: 20px; padding-right: 15px; border-top: 1px solid #232323; background: #3c3c3c; }
.foot .slider { width: 56px; }

/* console */
.console .search { width: 101px; margin-left: 11px; margin-right: 2px; padding-left: 2px; }
.console .cell { flex: none; padding: 0 4px; }
.console .editor { width: 51px; padding: 0; gap: 2px; }
.console .cell.cut { flex: 1 1 0; padding: 0 0 0 2px; }
.console .tally { width: 34px; padding: 0; color: #bbb; }
.tally svg { color: #8a8a8a; }
.errors { color: #e0e0e0; }
.log { flex: 400 1 0; border-bottom: 1px solid #1f1f1f; }
.detail { flex: 172 1 0; }

/* inspector */
.inspector .tab-tools { padding-right: 12px; }
.object { display: flex; height: 60px; padding: 8px 5px 0 4px; border-top: 1px solid #303030; background: #3c3c3c; }
.object-icon { display: flex; flex-direction: column; align-items: flex-end; width: 27px; }
.object-fields { flex: 1; padding-left: 12px; }
.name-row { display: flex; align-items: center; gap: 6px; margin-left: 3px; }
.static { display: flex; align-items: center; gap: 4px; }
.tag-row { display: grid; grid-template-columns: auto 312px auto 1fr; gap: 4px; align-items: center; margin-top: 6px; }
.tag-row label:nth-of-type(2) { margin-left: 11px; }
.field, select, input[type="checkbox"] {
  appearance: none;
  min-width: 0;
  border: 1px solid #212121;
  border-radius: 3px;
  outline: 0;
}
.field { flex: 1; width: 100%; height: 18px; padding: 0 2px; border-top-color: #0d0d0d; background: #2a2a2a; color: #d2d2d2; }
.name { font-weight: 500; }
select {
  width: 100%;
  height: 18px;
  padding: 0 16px 0 2px;
  border-color: #303030;
  background: #515151 url("data:image/svg+xml,%3Csvg xmlns='http://www.w3.org/2000/svg' width='8' height='5'%3E%3Cpath d='M0 0h8L4 5z' fill='%23c4c4c4'/%3E%3C/svg%3E") right 4px center no-repeat;
  color: #e4e4e4;
  line-height: 16px;
}
input[type="checkbox"] { flex: none; width: 14px; height: 14px; border-top-color: #0d0d0d; background: #2a2a2a; }
input[type="checkbox"]:checked {
  background: #2a2a2a url("data:image/svg+xml,%3Csvg xmlns='http://www.w3.org/2000/svg' width='10' height='10'%3E%3Cpath d='M1 5l3 3 5-7' fill='none' stroke='%23eee' stroke-width='1.600'/%3E%3C/svg%3E") center no-repeat;
}
.comp-head {
  display: flex;
  align-items: center;
  gap: 10px;
  height: 22px;
  padding: 0 12px 0 6px;
  border-top: 1px solid #1a1a1a;
  border-bottom: 1px solid #303030;
  background: #3e3e3e;
}
.comp-head .kind { margin-left: -3px; }
.comp-head .tick { display: flex; width: 14px; margin: 0 -4px 0 -5px; }
.comp-head b { flex: 1; color: #d8d8d8; }
.comp-head.closed { border-bottom-color: #1a1a1a; }
.blue { color: #7fd6fd; }
.props { display: flex; flex-direction: column; gap: 2px; padding: 4px 4px 8px 19px; }
.prop { display: grid; grid-template-columns: 294px minmax(0, 1fr); align-items: center; height: 18px; }
.prop.wide-gap { margin-bottom: 2px; }
.prop.sep { margin-bottom: 8px; }
.prop.tall { margin-bottom: 10px; }
.triple { display: grid; grid-template-columns: repeat(3, 1fr); gap: 4px; }
.triple label { display: grid; grid-template-columns: 11px 1fr; align-items: center; }
.triple.rect label { grid-template-columns: 14px 1fr; }
.rect span { padding-right: 2px; text-align: right; }
.plane { display: grid; grid-template-columns: 37px 1fr; align-items: center; }
.color { display: flex; align-items: center; gap: 3px; height: 18px; padding-right: 2px; border: 1px solid #232323; }
.swatch { flex: 1; height: 100%; border-bottom: 3px solid #000; background: #1f2a35; }
.object-field { display: flex; align-items: center; border-radius: 3px; background: #3a3a3a; }
.add-component { align-self: center; width: 229px; height: 23px; margin-top: 9px; border: 1px solid #303030; border-radius: 3px; background: #585858; color: #e4e4e4; }

.status { height: 24px; padding: 5px 32px 0 0; text-align: right; }
```
FILE: scene.js
```js
// Ground grid: one unit cell of (u, v) is a major square, split in ten.
const grid = document.getElementById('grid');

function project(u, v) {
  const w = 1 - 0.185 * u - 0.201 * v;
  return [(159.2 * u - 275.2 * v + 148) / w, (117.7 * u + 130.3 * v + 33) / w];
}

function addLine(from, to, major) {
  const line = document.createElementNS('http://www.w3.org/2000/svg', 'line');
  const [x1, y1] = project(...from);
  const [x2, y2] = project(...to);
  line.setAttribute('x1', x1);
  line.setAttribute('y1', y1);
  line.setAttribute('x2', x2);
  line.setAttribute('y2', y2);
  line.setAttribute('class', major ? 'major' : 'minor');
  grid.append(line);
}

for (let k = -20; k <= 35; k++) {
  const t = k / 10;
  const major = k % 10 === 0;
  addLine([t, -4], [t, (0.9 - 0.185 * t) / 0.201], major);
  addLine([-4, t], [(0.9 - 0.201 * t) / 0.185, t], major);
}
```
